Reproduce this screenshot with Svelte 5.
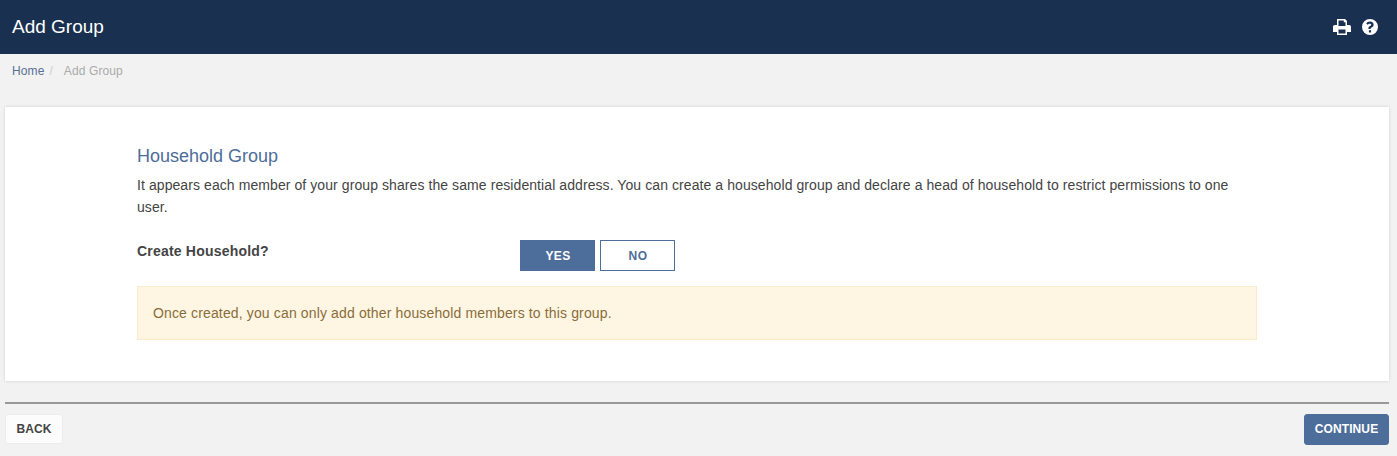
<script>
  let createHousehold = $state(true);
</script>

<div class="page">
  <header class="topbar">
    <h1>Add Group</h1>
    <div class="tools">
      <svg class="print" viewBox="0 0 18 16" width="18" height="16" aria-label="Print">
        <path
          fill-rule="evenodd"
          d="M4 0h8l2 2v4h2.200c1 0 1.800.8 1.800 1.800V13h-4v3H4v-3H0V7.800C0 6.800.8 6 1.800 6H4V0zM5.500 1.500V7h7V3.200h-1.700V1.500H5.500zM5.500 10.500v4h7v-4h-7z"
        />
      </svg>
      <svg class="help" viewBox="0 0 16 16" width="16" height="16" aria-label="Help">
        <path
          fill-rule="evenodd"
          d="M8 0a8 8 0 1 1 0 16A8 8 0 0 1 8 0zM6.900 11.300v2.200h2.200v-2.200H6.900zM8 2.600c-1.800 0-3 .8-3.800 2l1.500 1.200c.5-.6 1-1.100 2.100-1.100.8 0 1.400.4 1.400 1 0 .6-.5.9-1.200 1.300-.9.500-1.600 1.100-1.600 2.300v.8h2.200v-.5c0-.6.400-.8 1.100-1.200 1-.6 1.900-1.200 1.900-2.700 0-2-1.800-3.100-3.600-3.100z"
        />
      </svg>
    </div>
  </header>

  <nav class="crumbs">
    <a href="#home">Home</a>
    <span class="sep">/</span>
    <span class="current">Add Group</span>
  </nav>

  <section class="panel">
    <div class="inner">
      <h2>Household Group</h2>
      <p class="intro">
        It appears each member of your group shares the same residential address. You can create a household group and declare a head of household to restrict permissions to one user.
      </p>
      <div class="question">
        <span class="label">Create Household?</span>
        <div class="choice">
          <button class:active={createHousehold} onclick={() => (createHousehold = true)}>YES</button>
          <button class:active={!createHousehold} onclick={() => (createHousehold = false)}>NO</button>
        </div>
      </div>
      <div class="notice">Once created, you can only add other household members to this group.</div>
    </div>
  </section>

  <footer class="actions">
    <button class="back">BACK</button>
    <button class="continue">CONTINUE</button>
  </footer>
</div>

<style>
  :global(body) {
    margin: 0;
    background: #f2f2f2;
  }

  .page {
    height: 456px;
    overflow: hidden;
    background: #f2f2f2;
    font-family: "Liberation Sans", Arial, sans-serif;
    font-size: 14px;
    color: #444;
  }

  .topbar {
    display: flex;
    justify-content: space-between;
    align-items: center;
    height: 54px;
    padding: 0 19px 0 12px;
    background: #1a3050;
    color: #fff;
  }

  .topbar h1 {
    margin: 0;
    font-size: 19px;
    font-weight: 400;
  }

  .tools {
    display: flex;
    align-items: center;
    gap: 11px;
  }

  .tools svg {
    display: block;
    fill: #fff;
  }

  .crumbs {
    display: flex;
    height: 34px;
    padding-left: 12px;
    align-items: center;
    font-size: 12px;
    letter-spacing: 0.1px;
    color: #aaa;
  }

  .crumbs a {
    color: #566f92;
    text-decoration: none;
  }

  .sep {
    margin-left: 5px;
    color: #ccc;
  }

  .current {
    margin-left: 11px;
  }

  .panel {
    margin: 19px 8px 0 5px;
    height: 274px;
    box-sizing: border-box;
    background: #fff;
    box-shadow: 0 0 3px rgba(0, 0, 0, 0.14);
    padding: 39px 132px 0;
    letter-spacing: 0.08px;
  }

  .panel h2 {
    margin: 0;
    font-size: 18px;
    line-height: 20px;
    font-weight: 400;
    letter-spacing: 0;
    color: #4d6d9a;
  }

  .intro {
    margin: 8px 0 0;
    line-height: 22px;
  }

  .question {
    display: flex;
    margin-top: 22px;
  }

  .label {
    width: 383px;
    margin-top: 3px;
    font-weight: 700;
    line-height: 16px;
    letter-spacing: 0.2px;
  }

  .choice {
    display: flex;
    gap: 5px;
  }

  .choice button {
    width: 75px;
    height: 31px;
    padding: 0 0 0 1px;
    border: 1px solid #4d6d9a;
    background: #fff;
    color: #4d6d9a;
    font: 700 12px "Liberation Sans", Arial, sans-serif;
    letter-spacing: 0.4px;
  }

  .choice button.active {
    background: #4d6d9a;
    color: #fff;
  }

  .notice {
    margin-top: 15px;
    height: 54px;
    box-sizing: border-box;
    padding: 0 15px;
    display: flex;
    align-items: center;
    background: #fef6e3;
    border: 1px solid #faebcc;
    color: #8a6d3b;
    letter-spacing: 0.14px;
  }

  .actions {
    display: flex;
    justify-content: space-between;
    align-items: flex-start;
    margin: 21px 8px 0 5px;
    padding-top: 10px;
    border-top: 2px solid #999;
  }

  .actions button {
    border-radius: 3px;
    font: 700 12px "Liberation Sans", Arial, sans-serif;
    letter-spacing: 0.1px;
    padding: 0 0 1px;
  }

  .back {
    width: 58px;
    height: 30px;
    border: 1px solid #ececec;
    background: #fcfcfc;
    color: #444;
  }

  .continue {
    width: 85px;
    height: 31px;
    border: 1px solid #4d6d9a;
    background: #4d6d9a;
    color: #fff;
  }
</style>
